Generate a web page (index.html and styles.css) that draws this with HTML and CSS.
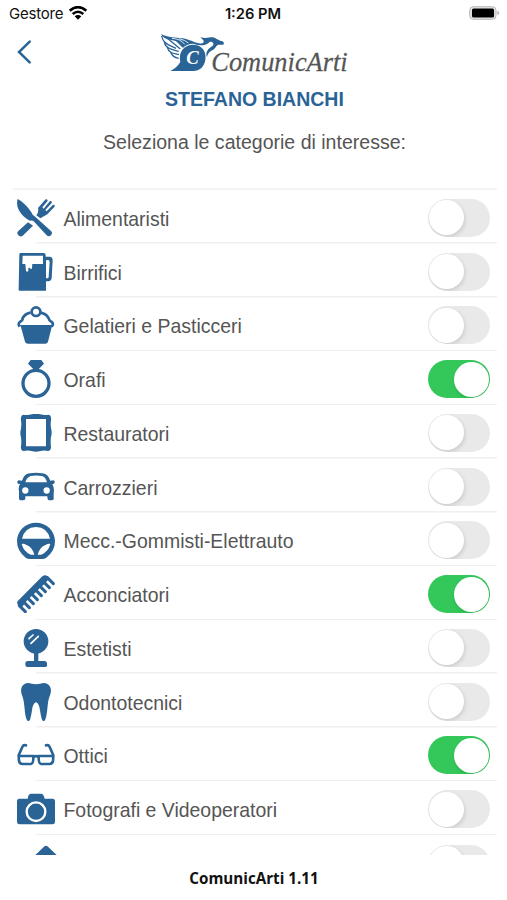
FILE: index.html
```
<!DOCTYPE html>
<html lang="it">
<head>
    <meta charset="UTF-8"/>
    <meta name="viewport" content="width=device-width, initial-scale=1.0"/>
    <title>ComunicArti</title>
    <link rel="stylesheet" href="styles.css">
</head>
<body>

<div class="status-bar">
    <div class="carrier">
        <span>Gestore</span>
        <svg class="wifi" viewBox="0 0 54 42">
            <path d="M2 14 Q27 -7 52 14" fill="none" stroke="#000" stroke-width="8"/>
            <path d="M11 24 Q27 10 43 24" fill="none" stroke="#000" stroke-width="7"/>
            <path d="M17 31 Q27 23 37 31 L27 41Z"/>
        </svg>
    </div>
    <div class="clock">1:26 PM</div>
    <svg class="battery" viewBox="0 0 94 42">
        <rect x="2" y="2" width="80" height="38" rx="11" fill="#e6e6e6" stroke="#b5b5b5" stroke-width="3"/>
        <rect x="9" y="7" width="67" height="28" rx="5"/>
        <path d="M86 14 Q92 17 92 21 Q92 25 86 28Z" fill="#b5b5b5"/>
    </svg>
</div>

<div class="header">
    <a href="#" class="back">
        <svg viewBox="0 0 42 70"><path d="M38 4 L6 35 L38 66" fill="none" stroke="#2a6496" stroke-width="7.5" stroke-linecap="round"/></svg>
    </a>
    <svg class="logo" viewBox="30 20 570 126">
        <g fill="#2a6496">
            <path d="M61 137 Q80 128 91 110 C84 77 104 57 132 58 C157 59 170 80 166 104 C162 125 149 137 130 137Z"/>
            <path d="M33 26 C54 37 77 36 98 39 C121 43 129 51 147 54 C158 56 164 52 160 45 L151 36 C168 41 177 36 188 36 C199 38 204 46 218 48 L222 53 L220 58 L209 58 C199 57 199 65 192 72 C180 79 174 82 171 96 C165 80 175 70 186 63 C194 57 190 48 180 49 C164 64 149 61 131 55 C116 55 104 61 98 68 C94 49 72 45 52 42 C42 38 36 33 33 26Z"/>
        </g>
        <g class="feathers">
            <path d="M35 32 C39 56 58 59 78 69"/>
            <path d="M43 48 C45 70 66 72 86 78"/>
            <path d="M52 65 C56 84 70 84 87 88"/>
            <path d="M62 80 C67 95 76 96 86 99"/>
            <path d="M54 40 L91 71"/>
            <path d="M74 40 L98 64"/>
        </g>
        <path d="M66 39 Q91 40 104 57 M87 40 Q105 44 115 53" fill="none" stroke="#fff" stroke-width="2.5"/>
        <text x="109" y="115" class="logo-c">C</text>
        <text x="184" y="136" class="logo-text" textLength="409" lengthAdjust="spacingAndGlyphs">ComunicArti</text>
    </svg>
</div>

<h1>STEFANO BIANCHI</h1>
<p class="subtitle">Seleziona le categorie di interesse:</p>

<div class="list">
    <div class="row">
        <svg class="icon" viewBox="0 0 114 114">
            <path d="M2 0 C15 5 36 28 43 40 Q46 48 52 51 L102 96 Q108 102 102 109 Q96 115 89 109 L50 67 Q46 63 39 65 C18 55 -7 28 2 0Z"/>
            <path d="M33 70 L48 80 L17 110 Q10 115 4 109 Q-2 102 4 96Z"/>
            <path d="M58 49 Q66 39 63 27 L86 1 Q92 -1 92 6 L76 25 L80 29 L99 6 Q106 5 104 12 L85 33 L89 37 L108 17 Q116 16 112 24 L91 46 Q79 53 70 58Z"/>
        </svg>
        <span class="name">Alimentaristi</span>
        <input type="checkbox" class="toggle">
    </div>
    <div class="row">
        <svg class="icon" viewBox="0 0 114 114">
            <path fill-rule="evenodd" d="M10 0 H81 Q86 1 86 7 V11 H98 Q107 12 107 22 L104 75 Q103 84 94 85 H87 V113 H7 Q4 112 5 106 L7 5 Q7 0 10 0Z M17 8 L16 33 H25 L27 54 Q30 59 34 54 V45 Q38 42 41 48 Q45 49 45 44 L46 33 H78 V8Z M87 22 V76 H91 Q95 76 95 71 L98 27 Q98 21 93 21Z"/>
        </svg>
        <span class="name">Birrifici</span>
        <input type="checkbox" class="toggle">
    </div>
    <div class="row">
        <svg class="icon" viewBox="0 0 114 114">
            <path d="M9 57 H105 Q107 60 104 64 L93 107 Q91 113 85 113 H33 Q26 113 24 107 L12 64Z"/>
            <path class="line" stroke-width="8" d="M8 62 Q1 53 10 47 Q18 42 17 36 Q26 22 41 20 M71 20 Q89 24 95 37 Q96 44 103 47 Q112 54 104 62"/>
            <circle class="line" stroke-width="8" cx="57" cy="17" r="13"/>
        </svg>
        <span class="name">Gelatieri e Pasticceri</span>
        <input type="checkbox" class="toggle">
    </div>
    <div class="row">
        <svg class="icon" viewBox="0 0 114 114">
            <circle class="line" stroke-width="10" cx="57" cy="70" r="39"/>
            <path d="M41 0 H73 L81 11 L66 26 V34 H48 V26 L33 11Z"/>
        </svg>
        <span class="name">Orafi</span>
        <input type="checkbox" class="toggle" checked>
    </div>
    <div class="row">
        <svg class="icon" viewBox="0 0 114 114">
            <path fill-rule="evenodd" d="M18 2 Q35 4 44 1 Q57 -3 70 1 Q80 4 96 2 Q104 5 102 18 Q100 31 102 43 Q106 57 102 69 Q100 83 102 98 Q102 109 94 111 Q80 108 70 111 Q57 116 44 111 Q35 108 18 111 Q10 109 12 96 Q14 83 12 70 Q8 57 12 44 Q14 31 12 18 Q10 5 18 2Z M27 15 V97 H87 V15Z"/>
        </svg>
        <span class="name">Restauratori</span>
        <input type="checkbox" class="toggle">
    </div>
    <div class="row">
        <svg class="icon" viewBox="0 0 114 114">
            <path fill-rule="evenodd" d="M4 37 L15 38 Q21 17 39 16 Q57 13 75 16 Q93 17 100 38 L110 37 Q116 43 111 47 L106 48 Q113 62 110 75 V92 Q110 97 104 97 H96 Q91 96 91 85 H25 V92 Q24 97 18 97 H10 Q5 96 6 87 V70 Q3 58 9 48 L3 47 Q-2 42 4 37Z M25 43 H90 Q86 27 75 24 Q57 21 41 24 Q29 28 25 43Z M25 58 A9 9 0 1 0 25 77 A9 9 0 1 0 25 58Z M89 58 A9 9 0 1 0 89 77 A9 9 0 1 0 89 58Z"/>
        </svg>
        <span class="name">Carrozzieri</span>
        <input type="checkbox" class="toggle">
    </div>
    <div class="row">
        <svg class="icon" viewBox="0 0 114 114">
            <path fill-rule="evenodd" d="M57 5 C88 5 114 29 114 61 Q114 91 87 111 Q82 114 76 114 H38 Q32 114 27 111 Q0 91 0 61 C0 29 26 5 57 5Z M15 53 H99 Q91 19 57 18 Q23 19 15 53Z M14 69 Q20 92 41 101 H52 Q47 78 27 71 Q20 67 14 69Z M100 69 Q94 92 73 101 H62 Q67 78 87 71 Q94 67 100 69Z"/>
        </svg>
        <span class="name">Mecc.-Gommisti-Elettrauto</span>
        <input type="checkbox" class="toggle">
    </div>
    <div class="row">
        <svg class="icon" viewBox="0 0 114 114">
            <path d="M3 77 L76 4 Q84 -2 91 3 L98 10 L82 27 L68 40 L54 54 L40 67 L26 81 L14 98 L4 91 Q-3 84 3 77Z"/>
            <path class="line" stroke-width="9" stroke-linecap="round" d="M91 8 L109 26 M79 20 L97 38 M67 32 L85 50 M55 44 L73 62 M43 56 L61 74 M31 68 L49 86 M19 80 L37 98 M7 92 L25 110"/>
        </svg>
        <span class="name">Acconciatori</span>
        <input type="checkbox" class="toggle" checked>
    </div>
    <div class="row">
        <svg class="icon" viewBox="0 0 114 114">
            <circle cx="57" cy="37" r="37"/>
            <path d="M51 70 H64 V96 H84 Q89 97 90 102 V110 Q89 114 84 114 H30 Q25 113 25 107 V101 Q26 96 32 96 H51Z"/>
            <path d="M36 29 L48 18 M42 43 L64 22" fill="none" stroke="#fff" stroke-width="5" stroke-linecap="round"/>
        </svg>
        <span class="name">Estetisti</span>
        <input type="checkbox" class="toggle">
    </div>
    <div class="row">
        <svg class="icon" viewBox="0 0 114 114">
            <path d="M24 2 C35 -3 45 4 57 4 C69 4 79 -3 90 2 C103 8 104 23 99 37 C94 49 93 59 91 78 Q89 100 84 112 Q79 117 75 110 Q72 102 69 82 C67 66 62 59 57 58 C52 59 47 66 45 82 Q42 102 39 110 Q35 117 30 112 Q24 100 23 78 C21 59 20 49 15 37 C10 23 11 8 24 2Z"/>
        </svg>
        <span class="name">Odontotecnici</span>
        <input type="checkbox" class="toggle">
    </div>
    <div class="row">
        <svg class="icon" viewBox="0 0 114 114">
            <path class="line" stroke-width="8" stroke-linejoin="round" stroke-linecap="round" d="M5 60 H49 Q50 83 42 84 H16 Q7 83 6 75Z M65 60 H109 L108 75 Q107 83 98 84 H72 Q64 83 65 60Z M49 63 Q57 58 65 63 M5 58 L17 31 Q19 26 27 28 M109 58 L97 31 Q95 26 87 28"/>
        </svg>
        <span class="name">Ottici</span>
        <input type="checkbox" class="toggle" checked>
    </div>
    <div class="row">
        <svg class="icon" viewBox="0 0 114 114">
            <path d="M6 26 H32 Q34 11 42 11 H72 Q80 11 83 26 H108 Q114 27 114 33 V97 Q113 103 107 103 H7 Q1 103 0 97 V33 Q0 27 6 26Z"/>
            <circle cx="57" cy="65" r="28" fill="none" stroke="#fff" stroke-width="7"/>
        </svg>
        <span class="name">Fotografi e Videoperatori</span>
        <input type="checkbox" class="toggle">
    </div>
    <div class="row row-next">
        <svg class="icon" viewBox="0 0 114 114">
            <path d="M57 2 Q60 2 63 5 L114 54 V114 H0 V54 L51 5 Q54 2 57 2Z"/>
        </svg>
        <span class="name"></span>
        <input type="checkbox" class="toggle">
    </div>
</div>

<div class="footer">ComunicArti 1.11</div>

</body>
</html>
```

FILE: styles.css
```
* {
  box-sizing: border-box;
}

body {
  margin: 0;
  height: 900px;
  background: #ffffff;
  color: #555555;
  font-family: "Liberation Sans", Arial, sans-serif;
  overflow: hidden;
  display: flex;
  flex-direction: column;
}

.status-bar {
  height: 28px;
  flex: none;
  display: grid;
  grid-template-columns: 1fr auto 1fr;
  align-items: center;
  padding: 0 7px 1px 9px;
  font-family: Inter, sans-serif;
  font-size: 15px;
  color: #111111;
}

.carrier {
  display: flex;
  align-items: center;
  gap: 6px;
  letter-spacing: -0.2px;
}

.wifi {
  width: 18px;
  height: 14px;
  margin-top: -1px;
}

.clock {
  font-weight: 600;
  font-size: 14.7px;
  margin-left: -3px;
}

.battery {
  width: 31px;
  height: 14px;
  justify-self: end;
  margin-top: -1px;
}

.header {
  height: 55px;
  flex: none;
  display: grid;
  grid-template-columns: 143px 190px 1fr;
  padding: 4px 0 0 17px;
}

.back svg {
  width: 14px;
  height: 24px;
  margin: 8px 0 0;
  display: block;
}

.logo {
  width: 190px;
  height: 42px;
  overflow: visible;
}

.feathers path {
  fill: none;
  stroke: #2a6496;
  stroke-width: 4;
}

.logo-c {
  font: italic bold 56px "Liberation Serif", serif;
  fill: #ffffff;
}

.logo-text {
  font: italic 84px "Liberation Serif", serif;
  fill: #555555;
  stroke: #555555;
  stroke-width: 0.8px;
}

h1 {
  margin: 5px 0 0;
  text-align: center;
  font-size: 19.5px;
  line-height: 22px;
  padding-left: 2px;
  color: #2a6496;
}

.subtitle {
  margin: 21px 0 0;
  text-align: center;
  font-size: 19.55px;
  line-height: 22px;
  padding-left: 2px;
}

.list {
  height: 667px;
  flex: none;
  margin: 35px 10px 0 13px;
  border-top: 2px solid #f3f3f3;
  overflow: hidden;
}

.row {
  height: 53.75px;
  display: flex;
  align-items: center;
  padding: 2px 7px 0 4px;
  background: linear-gradient(#efefef, #efefef) 23px 100% / 100% 1.5px no-repeat;
}

.icon {
  width: 38px;
  height: 38px;
  fill: #2a6496;
  flex: none;
}

.icon .line {
  fill: none;
  stroke: #2a6496;
}

.name {
  flex: 1;
  margin-left: 8.5px;
  padding-top: 2px;
  font-size: 19.45px;
  line-height: 22px;
}

.toggle {
  appearance: none;
  width: 62.5px;
  height: 38px;
  margin: 0;
  padding: 1.5px;
  border-radius: 19px;
  background: #e9e9e9;
  overflow: hidden;
}

.toggle::before {
  content: "";
  display: block;
  width: 35px;
  height: 35px;
  border-radius: 50%;
  background: #ffffff;
  box-shadow: 1px 2px 4px rgba(0, 0, 0, 0.13);
}

.toggle:checked {
  background: #34c759;
}

.toggle:checked::before {
  margin-left: 24.5px;
}

.row-next {
  padding-top: 4px;
}

.row-next .icon {
  margin-left: 10px;
}

.row-next .name {
  margin-left: 0;
}

.footer {
  margin-top: 12px;
  text-align: center;
  font-family: "Trebuchet MS", "Open Sans", sans-serif;
  font-size: 15.2px;
  font-weight: 700;
  line-height: 22px;
  padding-left: 1px;
  color: #111111;
}
```
